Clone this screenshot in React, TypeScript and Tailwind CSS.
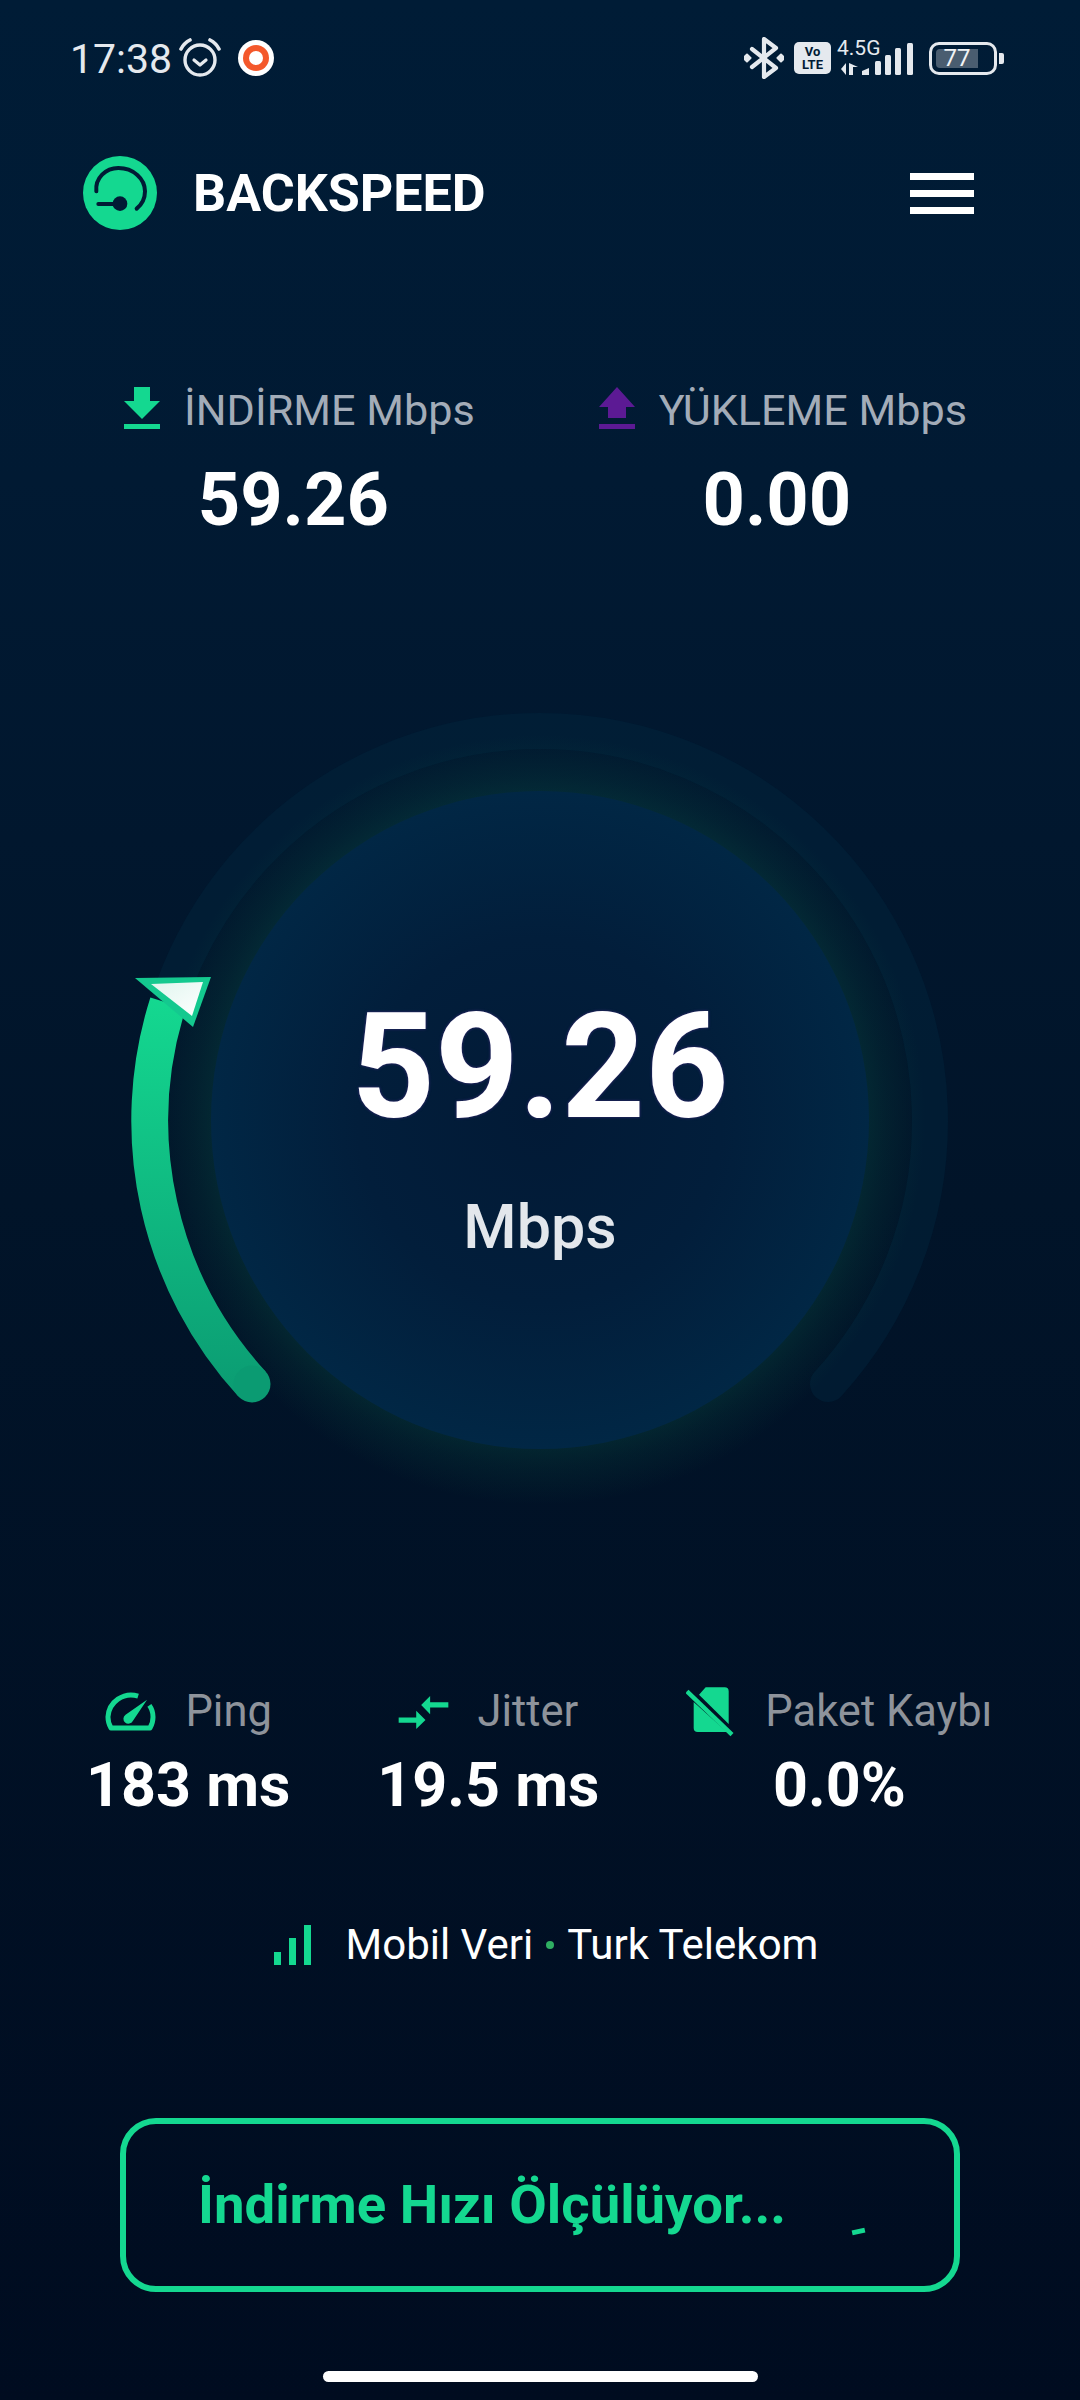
const GREEN = '#14d890'

function AlarmIcon() {
  return (
    <svg width="44" height="40" viewBox="0 0 44 40" fill="none" stroke="#e5e9ee" strokeLinecap="round">
      <circle cx="22" cy="22" r="15" strokeWidth="3.4" />
      <path d="M16 22l6 5 6-5" strokeWidth="3.2" strokeLinejoin="round" />
      <path d="M3 11 Q6 5 12 2" strokeWidth="3.6" />
      <path d="M41 11 Q38 5 32 2" strokeWidth="3.6" />
    </svg>
  )
}

function RecordIcon() {
  return (
    <div className="flex h-[36px] w-[36px] items-center justify-center rounded-full bg-white">
      <div className="flex h-[26px] w-[26px] items-center justify-center rounded-full bg-[#f4582b]">
        <div className="h-[14px] w-[14px] rounded-full bg-white" />
      </div>
    </div>
  )
}

function BluetoothIcon() {
  return (
    <svg width="40" height="42" viewBox="0 0 40 42" fill="none">
      <path d="M8 12l24 19-12 9V2l12 9L8 30" stroke="#e5e9ee" strokeWidth="4.2" strokeLinejoin="round" strokeLinecap="round" />
      <rect x="-0.5" y="17.5" width="7" height="7" rx="1" fill="#e5e9ee" transform="rotate(45 3 21)" />
      <rect x="33.5" y="17.5" width="7" height="7" rx="1" fill="#e5e9ee" transform="rotate(45 37 21)" />
    </svg>
  )
}

function SignalIcon() {
  return (
    <svg width="78" height="32" viewBox="0 0 78 32" fill="#e5e9ee">
      <path d="M4 26l5-6v12z" />
      <path d="M12 20v12h4v-8h5z" />
      <path d="M25 32v-4l7-3v7z" />
      <rect x="38" y="18" width="6" height="14" rx="1.500" />
      <rect x="48" y="12" width="6" height="20" rx="1.500" />
      <rect x="58" y="5" width="6" height="27" rx="1.500" />
      <rect x="70" y="0" width="6" height="32" rx="1.500" />
    </svg>
  )
}

function StatusBar() {
  return (
    <div className="flex h-[116px] items-center justify-between pl-[70px] pr-[76px] text-[#e5e9ee]">
      <div className="flex items-center">
        <span className="mt-[2px] w-[108px] text-[41px] leading-none">17:38</span>
        <AlarmIcon />
        <div className="ml-[16px]">
          <RecordIcon />
        </div>
      </div>
      <div className="flex items-center">
        <BluetoothIcon />
        <div className="ml-[10px] flex h-[32px] w-[37px] flex-col items-center justify-center rounded-[5px] bg-[#e5e9ee] text-[13px] font-bold leading-[13px] text-[#011b35]">
          <span>Vo</span>
          <span>LTE</span>
        </div>
        <div className="relative ml-[6px] h-[40px] w-[78px]">
          <span className="absolute left-0 top-[0px] text-[21px] leading-none">4.5G</span>
          <div className="absolute left-0 top-[5px]">
            <SignalIcon />
          </div>
        </div>
        <div className="ml-[14px] flex h-[33px] w-[68px] items-center rounded-[10px] border-[3px] border-[#e5e9ee] pl-[4px]">
          <div className="flex h-[19px] w-[42px] items-center justify-center rounded-l-[4px] bg-[#4a5d70] text-[24px] leading-none text-[#f1f3f5]">
            77
          </div>
        </div>
        <div className="ml-[2px] h-[11px] w-[5px] rounded-r-[2px] bg-[#e5e9ee]" />
      </div>
    </div>
  )
}

function Logo() {
  return (
    <svg width="74" height="74" viewBox="24 24 222 222" fill="none">
      <circle cx="135" cy="135" r="111" fill={GREEN} />
      <path d="M64 130C60 90 92 60 130 60C175 60 210 92 210 130C210 150 200 170 185 182" stroke="#011b35" strokeWidth="12" strokeLinecap="round" />
      <path d="M70 168H130" stroke="#011b35" strokeWidth="12" strokeLinecap="round" />
      <circle cx="135" cy="167" r="22" fill="#011b35" />
    </svg>
  )
}

function TopStat({ label, value, color, up, valueShift }: { label: string; value: string; color: string; up?: boolean; valueShift: string }) {
  return (
    <div className="flex flex-col items-center">
      <div className="flex h-[46px] items-center">
        <svg width="36" height="42" viewBox="0 0 36 42" fill={color}>
          {up ? <path d="M18 0L36 20H27V31H9V20H0z" /> : <path d="M10 0H26V14H36L18 32 0 14H10z" />}
          <rect x="0" y="37" width="36" height="5" />
        </svg>
        <span className="ml-[24px] pt-[6px] text-[43.2px] leading-none text-[#a3acb8]">{label}</span>
      </div>
      <div className={`mt-[29px] text-[74px] font-bold leading-[80px] text-white ${valueShift}`}>{value}</div>
    </div>
  )
}

function Gauge() {
  return (
    <div className="relative mt-[160px] h-[840px] w-full">
      <svg width="1080" height="840" viewBox="0 0 1080 840" fill="none" className="absolute inset-0">
        <defs>
          <radialGradient id="glow" gradientUnits="userSpaceOnUse" cx="540" cy="420" r="385">
            <stop offset="0.84" stopColor="#0e7a55" stopOpacity="0.2" />
            <stop offset="0.9" stopColor="#0e7a55" stopOpacity="0.11" />
            <stop offset="1" stopColor="#0e7a55" stopOpacity="0" />
          </radialGradient>
          <radialGradient id="disc" gradientUnits="userSpaceOnUse" cx="540" cy="420" r="330">
            <stop offset="0" stopColor="#021a36" />
            <stop offset="0.55" stopColor="#021e3b" />
            <stop offset="1" stopColor="#012745" />
          </radialGradient>
          <linearGradient id="arc" gradientUnits="userSpaceOnUse" x1="0" y1="300" x2="0" y2="700">
            <stop offset="0" stopColor="#14d890" />
            <stop offset="1" stopColor="#0b9b72" />
          </linearGradient>
          <linearGradient id="tip" x1="0" y1="0" x2="1" y2="1">
            <stop offset="0" stopColor="#dff5ee" />
            <stop offset="1" stopColor="#ffffff" />
          </linearGradient>
        </defs>
        <path d="M252 684A390 390 0 1 1 828 684" stroke="#02243c" strokeOpacity="0.5" strokeWidth="36" strokeLinecap="round" />
        <circle cx="540" cy="420" r="385" fill="url(#glow)" />
        <circle cx="540" cy="420" r="329" fill="url(#disc)" />
        <path d="M252 684A390 390 0 0 1 168 303" stroke="url(#arc)" strokeWidth="37" />
        <circle cx="252" cy="684" r="18.500" fill="#0b9b72" />
        <path d="M135 278L211 277L193 327z" fill="#14c98f" />
        <path d="M151 284L203 282L192 316z" fill="url(#tip)" />
      </svg>
      <div className="absolute inset-0 flex flex-col items-center">
        <div className="mt-[293px] text-[146px] font-bold leading-[150px] text-white [text-shadow:0_0_3px_#3b2a7a]">59.26</div>
        <div className="mt-[49px] text-[61px] font-medium leading-[70px] text-[#e3e7ec]">Mbps</div>
      </div>
    </div>
  )
}

function PingIcon() {
  return (
    <svg width="53" height="40" viewBox="35 35 160 120" fill="none">
      <path d="M138 47A70 70 0 0 0 47 110Q47 128 56 143H174Q183 128 183 110Q183 90 172 75" stroke={GREEN} strokeWidth="15" strokeLinejoin="round" />
      <path d="M165 58L122 122A15 15 0 1 1 100 103z" fill={GREEN} />
    </svg>
  )
}

function JitterIcon() {
  return (
    <svg width="51" height="35" viewBox="25 43 154 104" fill={GREEN}>
      <path d="M177 64H122V45L95 72L122 100V80H177z" />
      <path d="M27 110H80V90L108 118L80 145V126H27z" />
    </svg>
  )
}

function LossIcon() {
  return (
    <svg width="48" height="52" viewBox="27 24 144 156" fill={GREEN}>
      <path d="M66 50L86 28H143Q155 28 155 40V138z" />
      <path d="M50 72V150Q50 162 62 162H150z" />
      <path d="M30 40L165 170" stroke={GREEN} strokeWidth="13" />
    </svg>
  )
}

function BottomStat({ icon, label, value, gap }: { icon: React.ReactNode; label: string; value: string; gap: string }) {
  return (
    <div className="flex flex-col items-center">
      <div className="flex h-[46px] items-center">
        {icon}
        <span className={`text-[43.5px] leading-none text-[#8e939b] ${gap}`}>{label}</span>
      </div>
      <div className="mt-[15px] text-[61px] font-bold leading-[70px] text-white">{value}</div>
    </div>
  )
}

export default function App() {
  return (
    <div className="flex h-[2400px] w-[1080px] flex-col overflow-hidden bg-[linear-gradient(180deg,#001c36_0%,#011a33_20%,#011429_50%,#000c20_100%)] font-['Roboto',sans-serif]">
      <StatusBar />

      <div className="flex h-[154px] items-center justify-between pl-[83px] pr-[106px]">
        <div className="flex items-center">
          <Logo />
          <span className="ml-[36px] pt-[2px] text-[52px] font-bold leading-none text-white">BACKSPEED</span>
        </div>
        <div className="flex w-[64px] flex-col gap-[10px]">
          <div className="h-[7px] bg-white" />
          <div className="h-[7px] bg-white" />
          <div className="h-[7px] bg-white" />
        </div>
      </div>

      <div className="mt-[115px] flex pl-[124px] gap-[124px]">
        <TopStat label="İNDİRME Mbps" value="59.26" color={GREEN} valueShift="-translate-x-[6px]" />
        <TopStat label="YÜKLEME Mbps" value="0.00" color="#5c1a94" up valueShift="-translate-x-[6px]" />
      </div>

      <Gauge />

      <div className="mt-[149px] flex gap-[87px] pl-[86px]">
        <BottomStat icon={<PingIcon />} label="Ping" value="183 ms" gap="ml-[28px]" />
        <BottomStat icon={<JitterIcon />} label="Jitter" value="19.5 ms" gap="ml-[28px]" />
        <BottomStat icon={<LossIcon />} label="Paket Kaybı" value="0.0%" gap="ml-[31px]" />
      </div>

      <div className="mt-[100px] flex h-[50px] items-center justify-center pl-[12px]">
        <div className="flex items-end gap-[8px]">
          <div className="h-[13px] w-[7px] bg-[#14d890]" />
          <div className="h-[27px] w-[7px] bg-[#14d890]" />
          <div className="h-[40px] w-[7px] bg-[#14d890]" />
        </div>
        <span className="ml-[35px] text-[42px] leading-none text-white">Mobil Veri</span>
        <div className="mx-[13px] h-[8px] w-[8px] rounded-full bg-[#2fae62]" />
        <span className="text-[42px] leading-none text-white">Turk Telekom</span>
      </div>

      <div className="relative mx-[120px] mt-[148px] flex h-[174px] items-center rounded-[36px] border-[6px] border-[#14d890] pl-[72px]">
        <span className="pb-[2px] text-[54.5px] font-bold leading-none text-[#14d890]">İndirme Hızı Ölçülüyor...</span>
        <div className="absolute left-[726px] top-[105px] h-[5px] w-[13px] -rotate-12 bg-[#14d890]" />
      </div>

      <div className="mx-auto mt-[79px] h-[11px] w-[435px] rounded-full bg-white" />
    </div>
  )
}
